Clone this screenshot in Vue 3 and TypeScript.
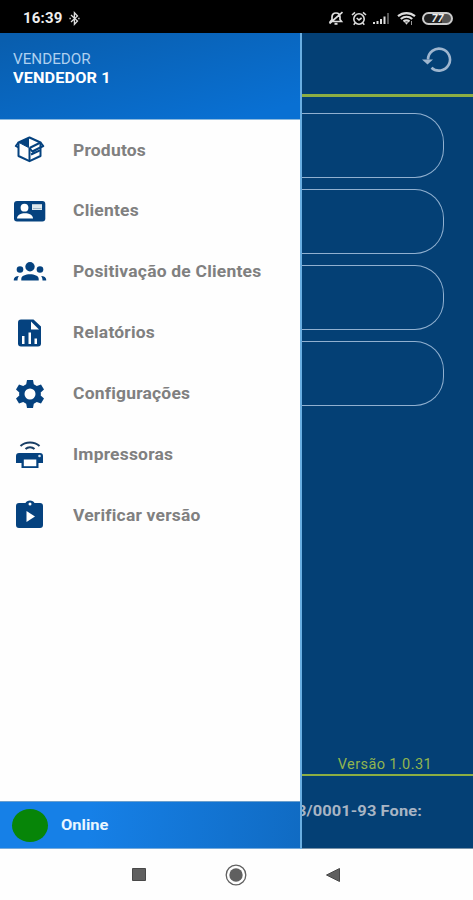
<script setup lang="ts">
interface MenuItem {
  id: string
  label: string
}

const items: MenuItem[] = [
  { id: 'box', label: 'Produtos' },
  { id: 'card', label: 'Clientes' },
  { id: 'group', label: 'Positivação de Clientes' },
  { id: 'report', label: 'Relatórios' },
  { id: 'gear', label: 'Configurações' },
  { id: 'printer', label: 'Impressoras' },
  { id: 'update', label: 'Verificar versão' },
]
</script>

<template>
  <div class="phone">
    <header class="status">
      <div class="status-left">
        <span class="clock">16:39</span>
        <svg class="bt" width="11" height="15" viewBox="0 0 11 15" fill="none" stroke="#ddd" stroke-width="1.3">
          <path d="M2 4l6.500 6L5.400 13.300V1.700L8.500 5 2 11" />
          <path d="M.4 7.500h1.400M9.200 7.500h1.400" stroke-width="1.600" />
        </svg>
      </div>
      <div class="status-right">
        <svg width="16" height="15" viewBox="0 0 16 15" fill="none" stroke="#ddd" stroke-width="1.700">
          <path d="M2.500 10.500h11L12 8.500V6C12 3.500 10.500 2 8 2S4 3.500 4 6v2.500l-1.500 2zM14.500 1.200L1.500 12.500" />
          <path d="M6.500 12.800h3" stroke-width="2" />
        </svg>
        <svg width="16" height="15" viewBox="0 0 16 15" fill="none" stroke="#ddd" stroke-width="1.600">
          <circle cx="8" cy="8" r="5.200" />
          <path d="M1 4l3-2.600M15 4l-3-2.600M5.700 7L8 9l2.600-2M4.200 12l-1.500 1.700M11.800 12l1.500 1.700" />
        </svg>
        <svg width="17" height="13" viewBox="0 0 17 13">
          <path fill="#ddd" d="M0 10h2v2H0zM3.500 9h2v3h-2zM7 7h2v5H7zM10.500 4.500h2V12h-2z" />
          <path fill="#555" d="M14 1h2v11h-2z" />
        </svg>
        <svg class="wifi" width="19" height="15" viewBox="0 0 19 15" fill="none" stroke="#ddd" stroke-width="2.200">
          <path d="M1 5.200c5-4.200 12-4.200 17 0M3.800 8c3.500-2.900 8-2.900 11.400 0M6.500 10.500c2-1.500 4-1.500 6 0" />
          <path d="M7.600 11.300h3.800l-1.900 2.500z" fill="#ddd" stroke="none" />
          <path d="M14.500 10v4" stroke="#999" stroke-width="1" />
        </svg>
        <div class="battery"><span>77</span></div>
      </div>
    </header>

    <main class="body">
      <aside class="drawer">
        <div class="profile">
          <span class="role">VENDEDOR</span>
          <strong class="name">VENDEDOR 1</strong>
        </div>
        <nav class="menu">
          <a v-for="item in items" :key="item.id" class="item">
            <svg class="icon" width="34" height="32" viewBox="0 0 34 32" fill="#05427f">
              <g v-if="item.id === 'box'" stroke="#05427f" stroke-width="2" fill="none" stroke-linejoin="round">
                <path d="M16.500 3.500L5.500 8.500v13.500l11 5.200 11-5.200V8.500z" />
                <path d="M15.500 4L6 8.500l9.500 5z" fill="#05427f" stroke-width="1" />
                <path d="M5.500 8.500L2.800 12l2.700 1.500M16.500 14v13M16.500 14l11-5.500" />
                <path d="M27.500 8.500l2.800 3.500-11 5.500-2.800-3.500M18 20.500l9-4.200" />
              </g>
              <template v-else-if="item.id === 'card'">
                <rect x="1" y="6" width="31.300" height="20.500" rx="3" />
                <g fill="#fff">
                  <circle cx="11.500" cy="12.700" r="3.900" />
                  <path d="M4 23.500c0-7 16-7 16 0z" />
                </g>
                <path fill="#dce7ec" d="M19 9.200h10v5.800H19z" />
                <path d="M20 13.500h8.500" stroke="#9eb6c8" stroke-width="1" />
              </template>
              <template v-else-if="item.id === 'group'">
                <circle cx="17" cy="10.800" r="4.700" />
                <circle cx="7" cy="13.500" r="3.300" />
                <circle cx="27" cy="13.500" r="3.300" />
                <path d="M8.300 24.500v-1.700c0-6 17.400-6 17.400 0v1.700zM.8 24.500v-1c0-2 2-3.300 5.200-3.500-1 1-1.500 2.500-1.500 4.500zM33.200 24.500v-1c0-2-2-3.300-5.200-3.500 1 1 1.500 2.500 1.500 4.500z" />
              </template>
              <template v-else-if="item.id === 'report'">
                <path d="M8 2.500h12.500l7.500 7v17q0 3-3 3H8q-3 0-3-3v-21q0-3 3-3z" />
                <path fill="#fff" d="M18 4.500v8h8zM9 19h2.500v8H9zM15.500 15.500H18V27h-2.500zM21.500 21.500H24V27h-2.500z" />
              </template>
              <template v-else-if="item.id === 'gear'">
                <path fill-rule="evenodd" d="M14 2h6l.8 4.300 3 1.700 4.200-1.500 3 5-3.300 3q.4 1.500 0 3l3.300 3-3 5-4.200-1.500-3 1.700L20 30h-6l-.8-4.300-3-1.700L6 25.500l-3-5 3.300-3q-.4-1.500 0-3L3 11.500l3-5L10.200 8l3-1.700zM17 10.500a5.500 5.500 0 100 11 5.500 5.500 0 000-11z" />
              </template>
              <template v-else-if="item.id === 'printer'">
                <path d="M7.500 7c5-4.700 14-4.700 19 0M12.500 10c2.500-2.400 6.500-2.400 9 0" fill="none" stroke="#183e65" stroke-width="2" />
                <path d="M6 14h21q3 0 3 3v7h-4.500v5h-17v-5H3v-7q0-3 3-3z" />
                <path fill="#fff" d="M10.800 20.500h12.500v6.700H10.800z" />
                <circle cx="26.500" cy="17" r="1.300" fill="#d5e4f2" />
              </template>
              <template v-else>
                <path d="M6 4h6.500C13.500 .5 20.500 .5 21.500 4H27q3 0 3 3v19q0 3-3 3H6q-3 0-3-3V7q0-3 3-3z" />
                <circle cx="17" cy="5" r="1.500" fill="#fff" />
                <path fill="#fff" d="M13.500 12v11l8.500-5.500z" />
              </template>
            </svg>
            <span class="label">{{ item.label }}</span>
          </a>
        </nav>
        <div class="connection">
          <span class="dot"></span>
          <span class="online">Online</span>
        </div>
      </aside>

      <section class="page">
        <div class="toolbar">
          <svg width="30" height="26" viewBox="0 0 30 26" fill="none">
            <path d="M6 12.500A11 11 0 1 1 9.500 20.700" stroke="#9fb6cf" stroke-width="2.600" />
            <path d="M0 12.500h11L5.500 17.500z" fill="#9fb6cf" />
          </svg>
        </div>
        <div class="cards">
          <div v-for="n in 4" :key="n" class="outline"></div>
        </div>
        <div class="version">Versão 1.0.31</div>
        <footer class="company"><span>3/0001-93 Fone:</span></footer>
      </section>
    </main>

    <nav class="system">
      <svg width="16" height="16" viewBox="0 0 16 16"><path d="M1.500 1.500h13v12h-13z" fill="#606060" stroke="#484848" /></svg>
      <svg width="24" height="24" viewBox="0 0 24 24"><circle cx="12" cy="12" r="9.800" fill="none" stroke="#606060" stroke-width="1.300" /><circle cx="12" cy="12" r="6.700" fill="#606060" /></svg>
      <svg width="16" height="16" viewBox="0 0 16 16"><path d="M14.500 1.500v13L1.500 8z" fill="#606060" stroke="#484848" /></svg>
    </nav>
  </div>
</template>

<style>
body {
  margin: 0;
}
</style>

<style scoped>
.phone {
  width: 473px;
  height: 900px;
  display: flex;
  flex-direction: column;
  overflow: hidden;
  background: #fefefe;
  font-family: Roboto, "Liberation Sans", sans-serif;
}
svg {
  display: block;
  flex: none;
}
.status {
  box-sizing: border-box;
  height: 33px;
  flex: none;
  display: flex;
  justify-content: space-between;
  align-items: center;
  padding: 3px 20px 0 23px;
  background: #000;
  color: #eee;
}
.status-left,
.status-right {
  display: flex;
  align-items: center;
}
.status-left {
  gap: 6px;
}
.status-right {
  gap: 6.5px;
}
.clock {
  font-size: 15px;
  font-weight: 700;
  letter-spacing: 0.2px;
}
.battery {
  box-sizing: border-box;
  width: 31px;
  height: 13px;
  border: 2px solid #ccc;
  border-radius: 7px;
  background: linear-gradient(90deg, #222 65%, #555 65%);
  display: flex;
  justify-content: center;
  align-items: center;
  font-size: 11px;
  font-weight: 700;
  font-style: italic;
}
.body {
  height: 816px;
  flex: none;
  display: flex;
}
.drawer {
  box-sizing: border-box;
  width: 302px;
  flex: none;
  display: flex;
  flex-direction: column;
  border-right: 2px solid #69aee2;
  background: #fefefe;
}
.profile {
  box-sizing: border-box;
  height: 87px;
  display: flex;
  flex-direction: column;
  align-items: flex-start;
  padding: 18px 13px 0;
  background: linear-gradient(165deg, #095eae 5%, #0970d3 90%);
  border-bottom: 1px solid #8bb9df;
}
.role,
.name,
.label,
.online {
  transform-origin: left center;
}
.role {
  font-size: 14.5px;
  line-height: 18px;
  color: #aed0ef;
  transform: scaleX(1.05);
}
.name {
  font-size: 15.5px;
  line-height: 19px;
  letter-spacing: 0.1px;
  color: #fff;
  transform: scaleX(1.05);
}
.menu {
  flex: 1;
}
.item {
  height: 60.9px;
  display: flex;
  align-items: center;
  gap: 25.5px;
  padding-left: 13px;
}
.item:first-child {
  height: 60.5px;
}
.icon {
  width: 34px;
  height: 32px;
}
.label {
  font-size: 16px;
  font-weight: 700;
  letter-spacing: 0.2px;
  color: #808080;
  white-space: nowrap;
  transform: scaleX(1.09);
}
.connection {
  box-sizing: border-box;
  height: 48px;
  display: flex;
  align-items: center;
  gap: 13px;
  padding-left: 12px;
  background: linear-gradient(95deg, #1680e7 30%, #106bc3);
  border-top: 1px solid #6c9fcc;
  border-bottom: 1px solid #75aadb;
}
.dot {
  width: 36px;
  height: 33px;
  border-radius: 50%;
  background: #078508;
}
.online {
  font-size: 15.5px;
  font-weight: 700;
  color: #e9f6ff;
  transform: scaleX(1.06);
}
.page {
  flex: 1;
  min-width: 0;
  display: flex;
  flex-direction: column;
  overflow: hidden;
  background: #044075;
}
.toolbar {
  box-sizing: border-box;
  height: 64px;
  flex: none;
  display: flex;
  justify-content: flex-end;
  align-items: flex-start;
  padding: 14px 21px 0 0;
  border-bottom: 3px solid #8dae43;
}
.cards {
  flex: 1;
  display: flex;
  flex-direction: column;
  gap: 10.5px;
  padding: 15.5px 29px 0 0;
}
.outline {
  box-sizing: border-box;
  height: 65.5px;
  border: 1.5px solid #91b0d0;
  border-left: 0;
  border-radius: 0 29px 29px 0;
}
.version {
  box-sizing: border-box;
  height: 28px;
  padding-right: 41px;
  text-align: right;
  font-size: 14.5px;
  line-height: 34px;
  letter-spacing: 0.4px;
  color: #91b54f;
  border-bottom: 2px solid #8dae43;
}
.company {
  box-sizing: border-box;
  height: 73px;
  display: flex;
  justify-content: flex-end;
  padding: 25px 51.5px 0 0;
  font-size: 15.5px;
  font-weight: 700;
  line-height: 20px;
  letter-spacing: 0.1px;
  color: #a9b5c4;
  white-space: nowrap;
  border-bottom: 1px solid #7892a9;
}
.company span {
  transform: scaleX(1.06);
  transform-origin: right center;
}
.system {
  flex: 1;
  display: flex;
  justify-content: center;
  align-items: center;
  gap: 77px;
  padding-right: 1px;
}
</style>
